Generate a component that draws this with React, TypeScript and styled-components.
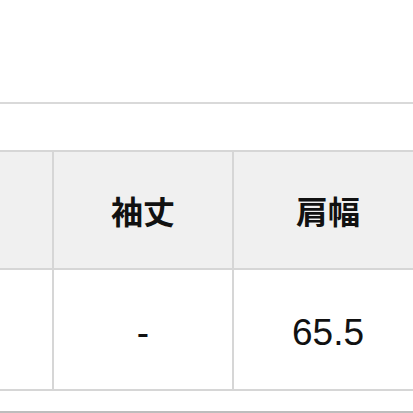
import React from "react";
import styled, { createGlobalStyle } from "styled-components";

const GlobalStyle = createGlobalStyle`
  html, body {
    margin: 0;
    padding: 0;
    background: #ffffff;
  }
  body {
    font-family: "Liberation Sans", "Noto Sans CJK JP", sans-serif;
    color: #111111;
  }
`;

const Page = styled.div`
  width: 413px;
  height: 413px;
  overflow: hidden;
  display: flex;
  flex-flow: column nowrap;
`;

const TopArea = styled.div`
  height: 102px;
  border-bottom: 2px solid #d9d9d9;
  flex-shrink: 0;
`;

const Spacer = styled.div<{ $h: number }>`
  height: ${(p) => p.$h}px;
  flex-shrink: 0;
`;

const TableClip = styled.div`
  width: 413px;
  overflow: hidden;
  flex-shrink: 0;
`;

const SizeTable = styled.div`
  display: grid;
  grid-template-columns: 52px 178px 188px;
  grid-template-rows: 116px 119px;
  gap: 2px;
  padding: 2px 0;
  width: 422px;
  background: #d6d6d6;
`;

const Cell = styled.div<{ $head?: boolean }>`
  display: flex;
  align-items: center;
  justify-content: center;
  background: ${(p) => (p.$head ? "#f0f0f0" : "#ffffff")};
  font-family: ${(p) =>
    p.$head
      ? `"Noto Sans CJK JP", "Noto Sans", sans-serif`
      : `"Liberation Sans", Arial, sans-serif`};
  font-size: ${(p) => (p.$head ? "32px" : "37px")};
  font-weight: ${(p) => (p.$head ? 700 : 400)};
  color: #111111;
  padding-top: ${(p) => (p.$head ? "0" : "6px")};
  box-sizing: border-box;
`;

const BottomLine = styled.div`
  height: 2px;
  background: #bdbdbd;
  flex-shrink: 0;
`;

const head = ["", "袖丈", "肩幅"];
const row = ["", "-", "65.5"];

export default function App() {
  return (
    <>
      <GlobalStyle />
      <Page>
        <TopArea />
        <Spacer $h={46} />
        <TableClip>
          <SizeTable>
            {head.map((h, i) => (
              <Cell $head key={"h" + i}>
                {h}
              </Cell>
            ))}
            {row.map((v, i) => (
              <Cell key={"r" + i}>{v}</Cell>
            ))}
          </SizeTable>
        </TableClip>
        <Spacer $h={20} />
        <BottomLine />
      </Page>
    </>
  );
}
